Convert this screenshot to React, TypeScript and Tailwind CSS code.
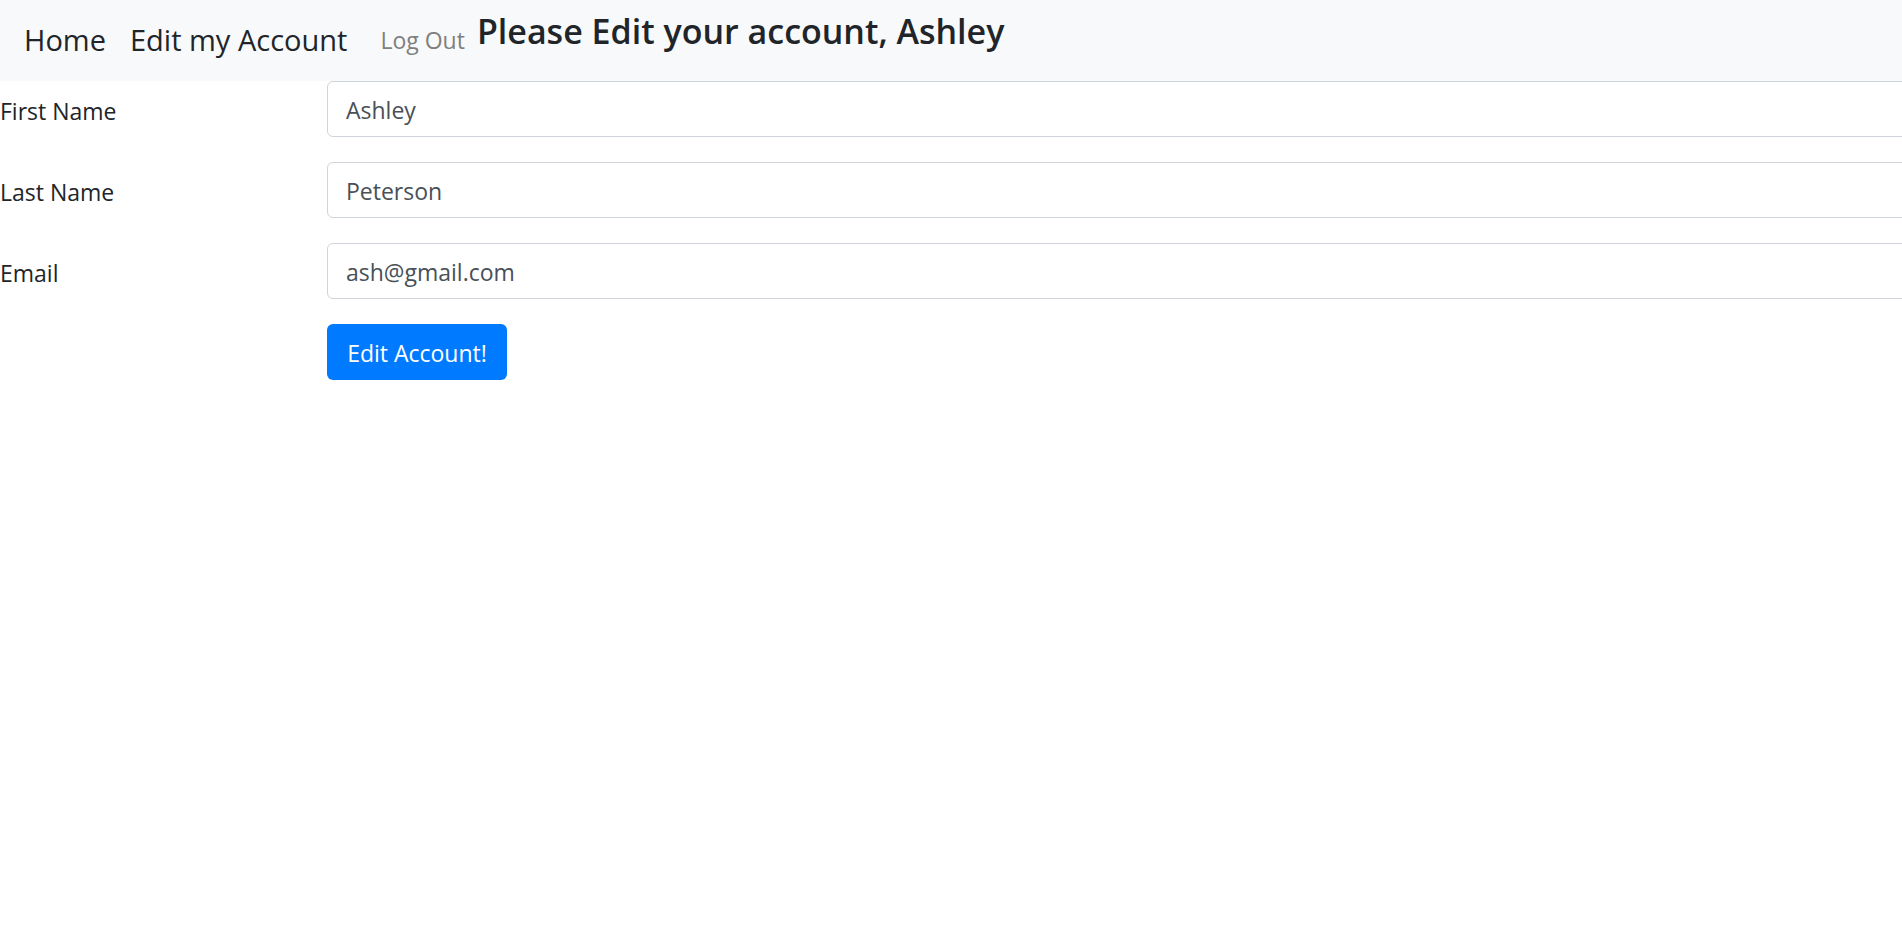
import React from "react";

const font = { fontFamily: '"Open Sans", "Noto Sans", Arial, sans-serif' };

function Field({ label, value }: { label: string; value: string }) {
  return (
    <div className="flex items-center mb-[25px]">
      <label className="w-[327px] shrink-0 pt-[4px] text-[23px] text-[#212529]">{label}</label>
      <input
        defaultValue={value}
        className="shrink-0 w-[1700px] h-[56px] px-[18px] pt-[2px] border border-[#ced4da] rounded-[6px] text-[23px] text-[#495057] bg-white outline-none"
      />
    </div>
  );
}

export default function App() {
  return (
    <div className="w-full min-h-screen overflow-hidden bg-white" style={font}>
      <nav className="flex items-start h-[81px] bg-[#f8f9fa] pl-[24px]">
        <a className="pt-[18px] text-[29px] text-[#212529] mr-[24px]">Home</a>
        <a className="pt-[18px] text-[29px] text-[#212529] mr-[33px]">Edit my Account</a>
        <a className="pt-[23px] text-[23px] text-[#7f7f7f] mr-[12px]">Log Out</a>
        <h4 className="pt-[6px] text-[34px] font-semibold text-[#212529]">
          Please Edit your account, Ashley
        </h4>
      </nav>
      <form className="flex flex-col">
        <Field label="First Name" value="Ashley" />
        <Field label="Last Name" value="Peterson" />
        <Field label="Email" value="ash@gmail.com" />
        <div className="pl-[327px]">
          <button
            type="button"
            className="h-[56px] w-[180px] pt-[3px] rounded-[6px] bg-[#007bff] text-white text-[23px]"
          >
            Edit Account!
          </button>
        </div>
      </form>
    </div>
  );
}
